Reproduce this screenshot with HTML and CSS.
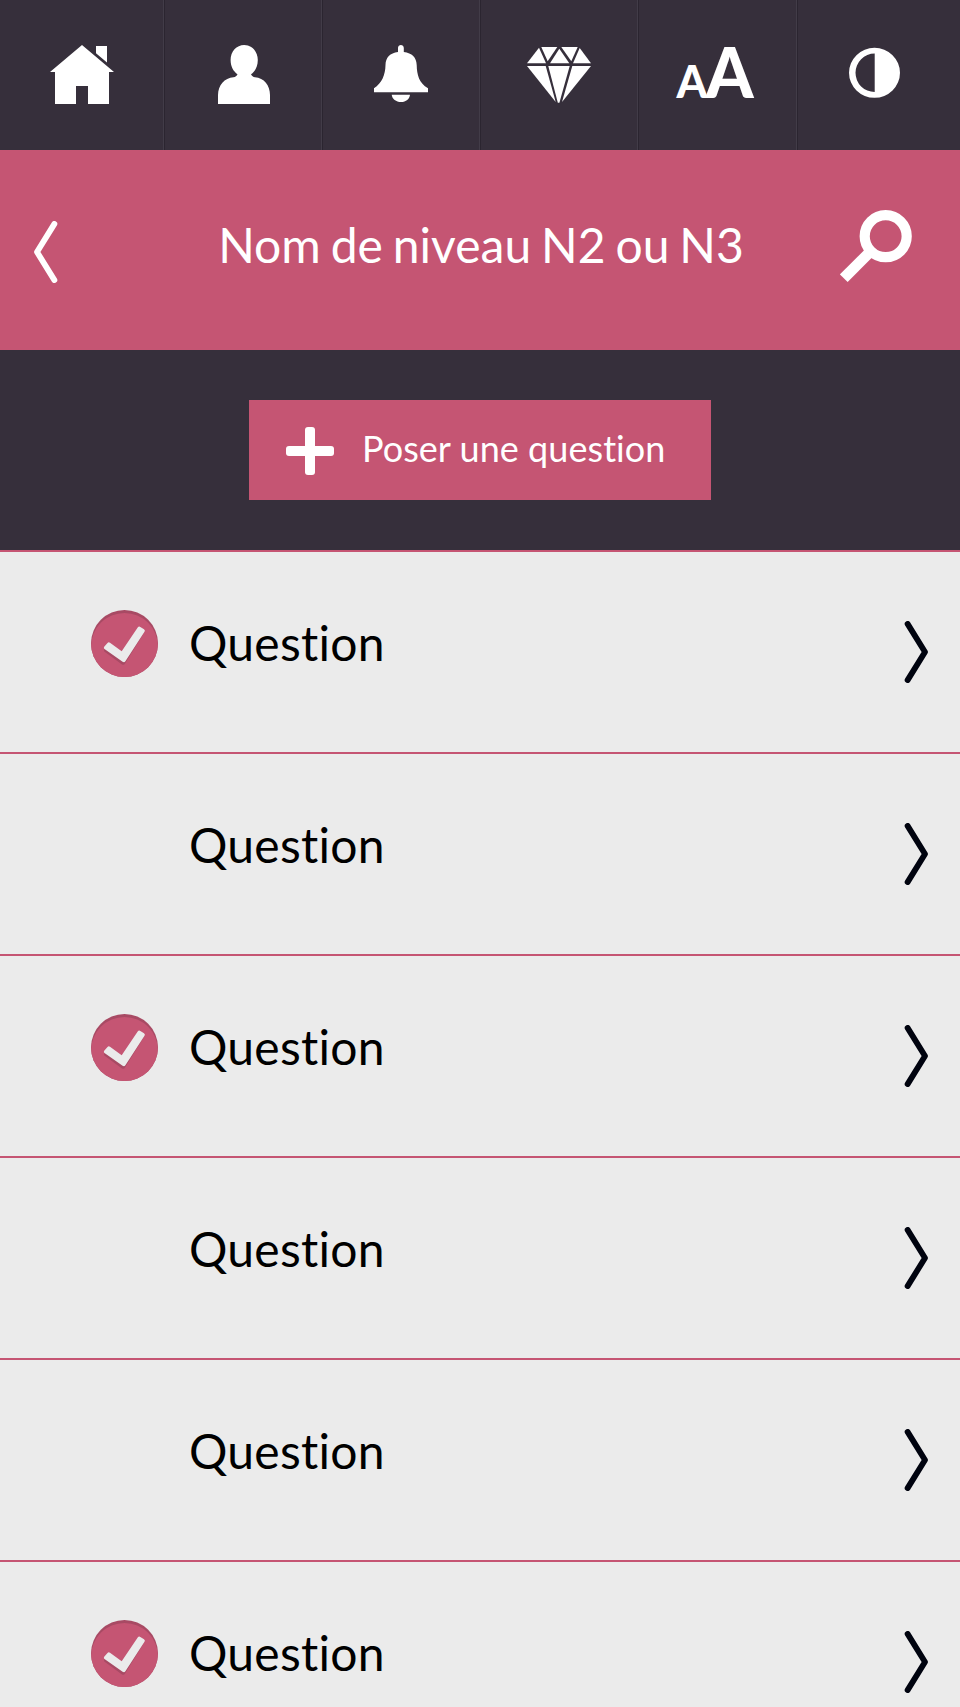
FILE: index.html
```html
<!DOCTYPE html>
<html lang="fr">
  <head>
    <meta charset="UTF-8" />
    <meta name="viewport" content="width=device-width, initial-scale=1.0" />
    <title>Questions</title>
    <link rel="stylesheet" href="styles.css">
  </head>
  <body>
    <!-- Shared icons -->
    <svg class="sprite" width="0" height="0">
      <clipPath id="disc"><circle cx="33.5" cy="33.5" r="33.5" /></clipPath>
      <symbol id="check" viewBox="0 0 67 67">
        <circle cx="33.5" cy="33.5" r="33.5" fill="#a84a64" />
        <circle cx="33.5" cy="36.5" r="33.5" fill="#c55573" clip-path="url(#disc)" />
        <path d="M14 38.5L30.7 44L53.5 22L34.2 53.2Q33 55.7 31 54.4L13.3 41.5Q12.3 40 14 38.5Z" fill="#a84a64" />
        <path d="M13.2 36.7L16.5 32.9Q17.6 31.8 19 32.7L30.7 41.3L46.7 17.5Q47.8 16 49.3 16.9L53 19.2Q54.5 20.2 53.5 21.8L34.4 51.3Q33.3 53 31.6 51.8L13.5 39Q12.2 38 13.2 36.7Z" fill="#ebebeb" />
      </symbol>
      <symbol id="arrow" viewBox="0 0 24 62">
        <path d="M3.6 2.9L21 31L3.6 59.1" fill="none" stroke="currentColor" stroke-width="5.8" stroke-linecap="round" stroke-linejoin="round" />
      </symbol>
    </svg>

    <nav class="navbar">
      <a class="nav-item">
        <svg width="65" height="64" viewBox="0 0 65 64">
          <path d="M33 2L65 29H60V61H39V43H27V61H6V29H1Z" />
          <path d="M47 3H58V19.5L47 10.3Z" />
        </svg>
      </a>
      <a class="nav-item">
        <svg width="64" height="64" viewBox="0 0 64 64">
          <path d="M33.2 2C41 2 46.8 8.5 46.8 17C46.8 24 43.8 28.5 40 31.3C41 33.2 42 34 44 34.2C53 35 59 42 59 52V61H7V52C7 42 13.5 35 22.5 34.2C24.5 34 25.6 33.2 26.5 31.3C22.7 28.5 19.6 24 19.6 17C19.6 8.5 25.5 2 33.2 2Z" />
        </svg>
      </a>
      <a class="nav-item">
        <svg width="64" height="64" viewBox="0 0 64 64">
          <path d="M29 9V5C29 1 34.8 1 34.8 5V9C43 10 47.5 14.5 47.7 22C47.9 32 50 40 59 45.3V49.3H5V45.3C13 40 16.3 32 16.5 22C16.7 14.5 21 10 29 9Z" />
          <path d="M22.7 51.7H41C40.5 56 37 59 32 59C27 59 23.2 56 22.7 51.7Z" />
        </svg>
      </a>
      <a class="nav-item">
        <svg width="64" height="64" viewBox="0 0 64 64">
          <path d="M12 4.7L19 20.3H0Z" />
          <path d="M14.3 4H30.3L20.7 18.3Z" />
          <path d="M32.3 5.7L42.3 20.3H23Z" />
          <path d="M34.3 4H50.7L44.3 18.3Z" />
          <path d="M52.7 5L64 20.3H46Z" />
          <path d="M0 23H18.7L28.7 59Z" />
          <path d="M21.3 23H42.7L32.4 59.7H30.8Z" />
          <path d="M45.3 23H64L35 59Z" />
        </svg>
      </a>
      <a class="nav-item">
        <span class="text-size"><small>A</small>A</span>
      </a>
      <a class="nav-item">
        <svg width="65" height="64" viewBox="0 0 65 64">
          <path fill-rule="evenodd" d="M28.5 4.8A25.5 25 0 0 1 28.5 54.8A25.5 25 0 0 1 28.5 4.8ZM28.7 10.6A19.2 19.2 0 0 0 28.7 49Z" />
        </svg>
      </a>
    </nav>

    <header class="header">
      <svg class="back" width="24" height="62"><use href="#arrow" /></svg>
      <h1>Nom de niveau N2 ou N3</h1>
      <svg class="search" width="72" height="73" viewBox="0 0 72 73">
        <circle cx="45.7" cy="26.2" r="21" fill="none" stroke="#fff" stroke-width="10.2" />
        <path d="M3.8 68.2L31 41" stroke="#fff" stroke-width="10.8" />
      </svg>
    </header>

    <div class="actions">
      <a class="ask-button">
        <svg width="48" height="48" viewBox="0 0 48 48">
          <rect x="0" y="19" width="48" height="10" rx="3" />
          <rect x="19" y="0" width="10" height="48" rx="3" />
        </svg>
        <span>Poser une question</span>
      </a>
    </div>

    <ul class="questions">
      <li>
        <svg class="check" width="67" height="67"><use href="#check" /></svg>
        <span class="label">Question</span>
        <svg class="arrow" width="24" height="62"><use href="#arrow" /></svg>
      </li>
      <li>
        <span class="label">Question</span>
        <svg class="arrow" width="24" height="62"><use href="#arrow" /></svg>
      </li>
      <li>
        <svg class="check" width="67" height="67"><use href="#check" /></svg>
        <span class="label">Question</span>
        <svg class="arrow" width="24" height="62"><use href="#arrow" /></svg>
      </li>
      <li>
        <span class="label">Question</span>
        <svg class="arrow" width="24" height="62"><use href="#arrow" /></svg>
      </li>
      <li>
        <span class="label">Question</span>
        <svg class="arrow" width="24" height="62"><use href="#arrow" /></svg>
      </li>
      <li>
        <svg class="check" width="67" height="67"><use href="#check" /></svg>
        <span class="label">Question</span>
        <svg class="arrow" width="24" height="62"><use href="#arrow" /></svg>
      </li>
    </ul>
  </body>
</html>
```

FILE: styles.css
```css
* {
    box-sizing: border-box;
}

body {
    font-family: Lato, sans-serif;
    font-variant-ligatures: none;
    height: 1707px;
    margin: 0;
    overflow: hidden;
    background-color: #ebebeb;
}

svg {
    display: block;
    flex: none;
}

.sprite {
    position: absolute;
}

/* Top bar */
.navbar {
    display: grid;
    grid-template-columns: 165px repeat(3, 158px) 159px 162px;
    height: 150px;
    background-color: #362f3b;
}

.nav-item {
    display: flex;
    justify-content: center;
    align-items: center;
    color: #fff;
    fill: #fff;
    border-right: 1px solid #2b2530;
    box-shadow: inset -1px 0 0 #423c48;
    padding-right: 1px;
}

.nav-item:last-child {
    border-right: none;
    box-shadow: none;
}

.text-size {
    font-size: 71px;
    font-weight: 900;
    line-height: 1;
    letter-spacing: -2px;
    margin: -9px 7px 0 0;
    transform: scaleX(0.96);
}

.text-size small {
    font-size: 46px;
}

/* Title */
.header {
    display: flex;
    align-items: center;
    height: 200px;
    padding: 0 48px 0 34px;
    background-color: #c55573;
    color: #fff;
}

.header h1 {
    flex: 1;
    margin: 0;
    padding: 0 0 11px 64px;
    font-size: 48px;
    font-weight: normal;
    word-spacing: -2.4px;
    text-align: center;
}

.back {
    transform: scaleX(-1);
    margin-top: 4px;
}

.search {
    margin-bottom: 8px;
}

.actions {
    height: 200px;
    padding-top: 50px;
    background-color: #362f3b;
}

.ask-button {
    display: flex;
    align-items: center;
    width: 462px;
    height: 100px;
    margin: 0 auto;
    padding-left: 37px;
    background-color: #c55573;
    color: #fff;
    fill: #fff;
    font-size: 36px;
    letter-spacing: 0.05px;
}

.ask-button svg {
    margin-top: 2px;
}

.ask-button span {
    margin-left: 28px;
    padding-bottom: 4px;
}

/* List */
.questions {
    list-style: none;
    margin: 0;
    padding: 0;
}

.questions li {
    display: grid;
    grid-template-columns: 98px 1fr 24px;
    align-items: center;
    height: 202px;
    padding: 0 32px 0 91px;
    border-top: 2px solid #c55573;
    color: #000;
    font-size: 48px;
    letter-spacing: 0.25px;
}

.questions .check {
    margin-bottom: 17px;
}

.label {
    grid-column: 2;
    padding-bottom: 19px;
}

.arrow {
    color: #00030f;
}
```
